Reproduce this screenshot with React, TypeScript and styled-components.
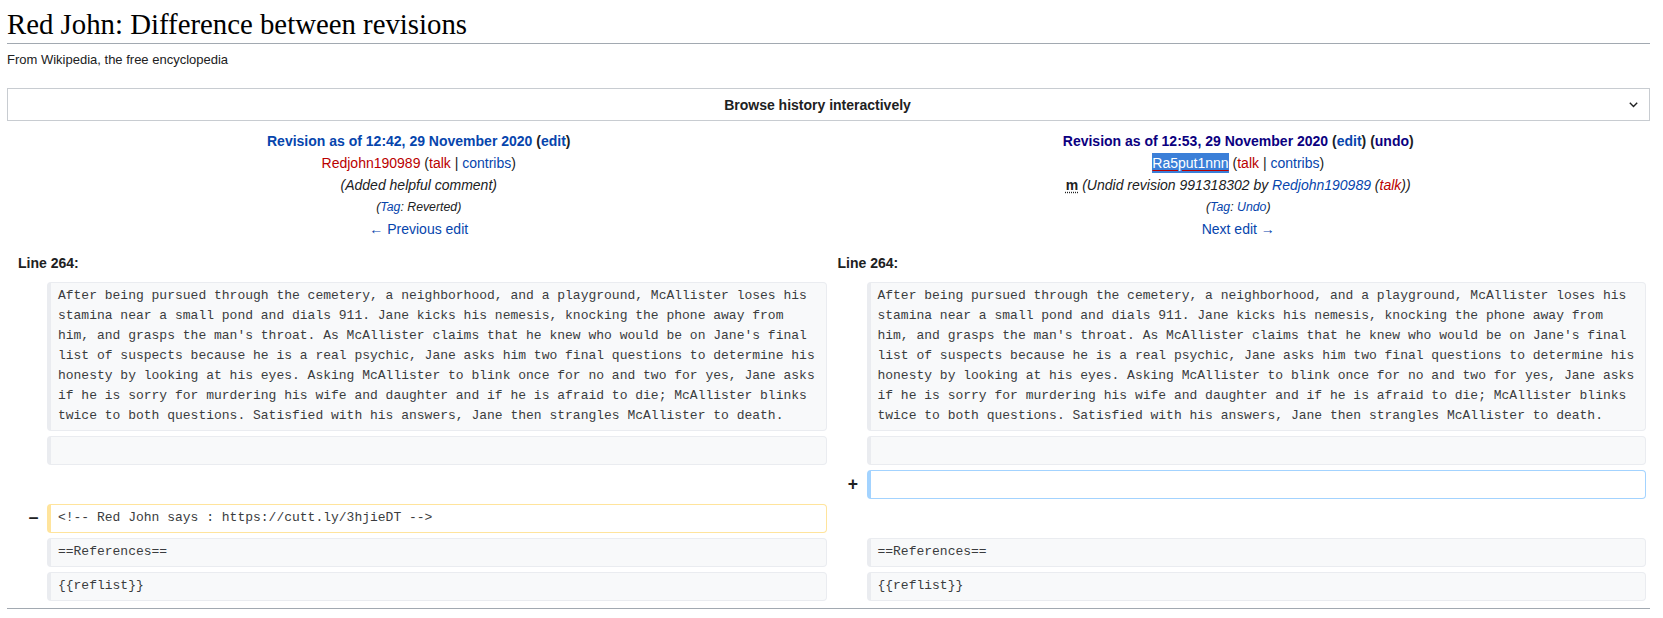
import React from 'react';
import styled, { createGlobalStyle } from 'styled-components';

const GlobalStyle = createGlobalStyle`
  html, body {
    margin: 0;
    padding: 0;
    background: #ffffff;
  }
  body {
    font-family: 'Liberation Sans', Arial, sans-serif;
    font-size: 14px;
    color: #202122;
  }
`;

type Kind = 'context' | 'added' | 'deleted';

const contextLines = [
  'After being pursued through the cemetery, a neighborhood, and a playground, McAllister loses his',
  'stamina near a small pond and dials 911. Jane kicks his nemesis, knocking the phone away from',
  "him, and grasps the man's throat. As McAllister claims that he knew who would be on Jane's final",
  'list of suspects because he is a real psychic, Jane asks him two final questions to determine his',
  'honesty by looking at his eyes. Asking McAllister to blink once for no and two for yes, Jane asks',
  'if he is sorry for murdering his wife and daughter and if he is afraid to die; McAllister blinks',
  'twice to both questions. Satisfied with his answers, Jane then strangles McAllister to death.',
].join('\n');

const App: React.FC = () => {
  return (
    <Page>
      <GlobalStyle />
      <Heading>Red John: Difference between revisions</Heading>
      <SiteSub>From Wikipedia, the free encyclopedia</SiteSub>

      <Browse>
        <BrowseLabel>Browse history interactively</BrowseLabel>
        <Chevron width='9' height='6' viewBox='0 0 9 6'>
          <path d='M0.8 0.8 L4.5 4.5 L8.2 0.8' fill='none' stroke='#202122' strokeWidth='1.4' />
        </Chevron>
      </Browse>

      <Diff>
        <Grid $rowGap={4}>
          <TitleCell>
            <Line>
              <b>
                <Link href='#'>Revision as of 12:42, 29 November 2020</Link> (<Link href='#'>edit</Link>)
              </b>
            </Line>
            <Line>
              <Link $red href='#'>Redjohn190989</Link> (<Link $red href='#'>talk</Link> | <Link href='#'>contribs</Link>)
            </Line>
            <Line>
              <i>(Added helpful comment)</i>
            </Line>
            <Tags>
              (<Link href='#'>Tag</Link>: Reverted)
            </Tags>
            <Line>
              <Link href='#'>← Previous edit</Link>
            </Line>
          </TitleCell>
          <TitleCell>
            <Line>
              <b>
                <Link $visited href='#'>Revision as of 12:53, 29 November 2020</Link> (<Link href='#'>edit</Link>) (
                <Link $visited href='#'>undo</Link>)
              </b>
            </Line>
            <Line>
              <Selected>Ra5put1nnn</Selected> (<Link $red href='#'>talk</Link> | <Link href='#'>contribs</Link>)
            </Line>
            <Line>
              <Minor title='This is a minor edit'>m</Minor>{' '}
              <i>
                (Undid revision 991318302 by <Link href='#'>Redjohn190989</Link> (<Link $red href='#'>talk</Link>))
              </i>
            </Line>
            <Tags>
              (<Link href='#'>Tag</Link>: <Link href='#'>Undo</Link>)
            </Tags>
            <Line>
              <Link href='#'>Next edit →</Link>
            </Line>
          </TitleCell>

          <LineNo>Line 264:</LineNo>
          <LineNo>Line 264:</LineNo>
        </Grid>

        <Grid $rowGap={5.5}>
          <Marker />
          <Content $kind='context'>{contextLines}</Content>
          <Marker />
          <Content $kind='context'>{contextLines}</Content>

          <Marker />
          <Content $kind='context' />
          <Marker />
          <Content $kind='context' />

          <EmptyHalf />
          <Marker>+</Marker>
          <Content $kind='added' />

          <Marker>−</Marker>
          <Content $kind='deleted'>{'<!-- Red John says : https://cutt.ly/3hjieDT -->'}</Content>
          <EmptyHalf />

          <Marker />
          <Content $kind='context'>==References==</Content>
          <Marker />
          <Content $kind='context'>==References==</Content>

          <Marker />
          <Content $kind='context'>{'{{reflist}}'}</Content>
          <Marker />
          <Content $kind='context'>{'{{reflist}}'}</Content>
        </Grid>
      </Diff>
      <Rule />
    </Page>
  );
};

export default App;

const Page = styled.div`
  padding: 0 13px 0 7px;
`;

const Heading = styled.h1`
  margin: 0;
  padding-top: 6px;
  font-family: 'Liberation Serif', 'Times New Roman', serif;
  font-weight: normal;
  font-size: 28.8px;
  line-height: 37px;
  color: #000000;
  border-bottom: 1px solid #a2a9b1;
`;

const SiteSub = styled.div`
  margin-top: 6px;
  font-size: 13px;
  line-height: 20px;
  color: #202122;
`;

const Browse = styled.div`
  margin-top: 18px;
  height: 33px;
  box-sizing: border-box;
  border: 1px solid #c8ccd1;
  background: #ffffff;
  display: flex;
  align-items: center;
`;

const BrowseLabel = styled.span`
  flex: 1;
  text-align: center;
  font-weight: bold;
  font-size: 14px;
  color: #202122;
`;

const Chevron = styled.svg`
  flex: none;
  margin: 1px 11px 0 2px;
`;

const Diff = styled.div`
  margin-top: 5px;
  padding: 4px;
  display: flex;
  flex-direction: column;
  gap: 4px;
`;

const Grid = styled.div<{ $rowGap: number }>`
  display: grid;
  grid-template-columns: 2fr 48fr 2fr 48fr;
  column-gap: 4px;
  row-gap: ${(p) => p.$rowGap}px;
`;

const TitleCell = styled.div`
  grid-column: span 2;
  text-align: center;
  font-size: 14px;
  line-height: 22px;
`;

const Line = styled.div`
  white-space: nowrap;
`;

const Tags = styled.div`
  font-size: 12.3px;
  font-style: italic;
  line-height: 22px;
`;

const Link = styled.a<{ $red?: boolean; $visited?: boolean }>`
  text-decoration: none;
  color: ${(p) => (p.$red ? '#ba0000' : p.$visited ? '#0b0080' : '#0645ad')};
`;

const Selected = styled.span`
  background: #3b7fd8;
  color: #ffffff;
  padding: 1.7px 0;
  text-decoration: underline;
  text-decoration-color: #ba0000;
  text-underline-offset: 2px;
`;

const Minor = styled.abbr`
  font-weight: bold;
  text-decoration: underline dotted;
  text-underline-offset: 2px;
  cursor: help;
`;

const LineNo = styled.div`
  grid-column: span 2;
  font-weight: bold;
  font-size: 14px;
  line-height: 22px;
  padding: 8px 7px 4px;
`;

const Marker = styled.div`
  display: flex;
  align-items: center;
  justify-content: flex-end;
  padding-right: 5px;
  font-weight: bold;
  font-size: 17.5px;
  line-height: 1.2;
  color: #202122;
`;

const EmptyHalf = styled.div`
  grid-column: span 2;
`;

const kindColors: Record<Kind, { border: string; bg: string }> = {
  context: { border: '#eaecf0', bg: '#f8f9fa' },
  added: { border: '#a3d3ff', bg: '#ffffff' },
  deleted: { border: '#ffe49c', bg: '#ffffff' },
};

const Content = styled.div<{ $kind: Kind }>`
  min-height: 20px;
  padding: 3.25px 6.5px;
  border-style: solid;
  border-width: 1px 1px 1px 4px;
  border-color: ${(p) => kindColors[p.$kind].border};
  background: ${(p) => kindColors[p.$kind].bg};
  border-radius: 4px;
  font-family: 'Liberation Mono', 'Courier New', monospace;
  font-size: 13px;
  line-height: 20px;
  white-space: pre;
  overflow: hidden;
  color: #3a3c3e;
`;

const Rule = styled.div`
  margin-top: 3px;
  border-top: 1px solid #a2a9b1;
`;
